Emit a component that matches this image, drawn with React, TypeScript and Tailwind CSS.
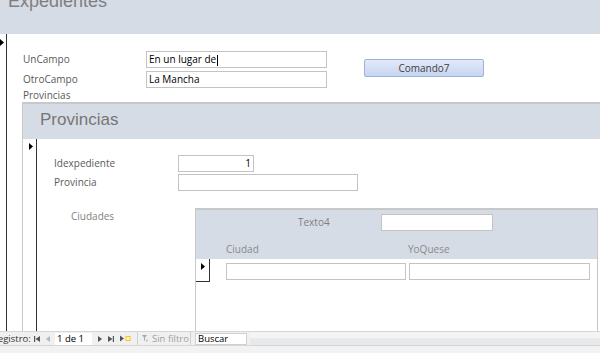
import React from "react";

const Tri = ({ c = "#000" }: { c?: string }) => (
  <svg width="4" height="7" viewBox="0 0 4 7" className="block">
    <path d="M0 0L4 3.5L0 7Z" fill={c} />
  </svg>
);

const Box = ({ w, children, right }: { w: string; children?: React.ReactNode; right?: boolean }) => (
  <div
    className={`${w} h-[17px] border border-[#c3c3c3] bg-white text-black text-[10px] leading-[15px] px-[2px] whitespace-nowrap ${right ? "text-right" : ""}`}
  >
    {children}
  </div>
);

export default function App() {
  return (
    <div
      className="w-[600px] h-[353px] overflow-hidden bg-white flex flex-col"
      style={{ fontFamily: "'Open Sans', 'Noto Sans', sans-serif" }}
    >
      {/* Form header */}
      <div className="h-[34px] shrink-0 bg-[#d6dce5] overflow-hidden">
        <div
          className="mt-[-10px] pl-[8px] text-[18px] leading-[22px] text-[#7f7f7f]"
          style={{ fontFamily: "'Liberation Sans', Arial, sans-serif" }}
        >
          Expedientes
        </div>
      </div>

      {/* Main */}
      <div className="h-[297px] shrink-0 flex">
        <div className="w-[7px] shrink-0 border-r border-[#333] pt-[5px]">
          <Tri />
        </div>
        <div className="flex-1 flex flex-col min-w-0">
          <div className="pt-[17px] flex">
            <div className="ml-[16px] flex flex-col gap-[3px]">
              <div className="flex items-center h-[17px]">
                <div className="w-[123px] text-[10px] text-[#595959]">UnCampo</div>
                <Box w="w-[181px]">
                  En un lugar de<span className="inline-block w-px h-[11px] bg-black align-middle ml-px" />
                </Box>
              </div>
              <div className="flex items-center h-[17px]">
                <div className="w-[123px] text-[10px] text-[#595959]">OtroCampo</div>
                <Box w="w-[181px]">La Mancha</Box>
              </div>
            </div>
            <div className="ml-[37px] mt-[8px] w-[120px] h-[18px] rounded-[2px] border border-[#9db3da] bg-gradient-to-b from-[#e3eaf8] to-[#c6d5f1] flex items-center justify-center text-[10px] text-[#404040]">
              Comando7
            </div>
          </div>
          <div className="ml-[16px] h-[14px] leading-[14px] text-[10px] text-[#595959]">Provincias</div>

          {/* Subform Provincias */}
          <div className="ml-[15px] flex-1 flex flex-col border-t-2 border-l border-[#c8c8c8] min-h-0">
            <div className="h-[35px] shrink-0 bg-[#d6dce5] pl-[17px] pt-[5px]">
              <div
                className="text-[17px] leading-[22px] text-[#767676]"
                style={{ fontFamily: "'Liberation Sans', Arial, sans-serif" }}
              >
                Provincias
              </div>
            </div>
            <div className="flex-1 flex min-h-0">
              <div className="w-[14px] shrink-0 border-r border-[#333] pt-[4px] pl-[6px]">
                <Tri />
              </div>
              <div className="flex-1 flex flex-col min-w-0 pt-[16px]">
                <div className="flex flex-col gap-[2px]">
                  <div className="flex items-center h-[17px]">
                    <div className="pl-[17px] w-[141px] text-[10px] text-[#595959]">Idexpediente</div>
                    <Box w="w-[76px]" right>1</Box>
                  </div>
                  <div className="flex items-center h-[17px]">
                    <div className="pl-[17px] w-[141px] text-[10px] text-[#595959]">Provincia</div>
                    <Box w="w-[180px]" />
                  </div>
                </div>
                <div className="mt-[17px] flex flex-1 min-h-0">
                  <div className="pl-[34px] w-[158px] shrink-0 text-[10px] leading-[14px] pt-[1px] text-[#7f7f7f]">
                    Ciudades
                  </div>
                  {/* Nested subform Ciudades */}
                  <div className="flex-1 mr-[2px] flex flex-col border-t-2 border-l border-r border-[#c8c8c8]">
                    <div className="h-[49px] shrink-0 bg-[#d6dce5] pt-[4px]">
                      <div className="flex items-center h-[17px]">
                        <div className="pl-[102px] w-[185px] text-[10px] text-[#7f7f7f]">Texto4</div>
                        <Box w="w-[112px]" />
                      </div>
                      <div className="mt-[11px] flex h-[14px] leading-[14px] text-[10px] text-[#8a8a8a]">
                        <div className="pl-[30px] w-[212px]">Ciudad</div>
                        <div>YoQuese</div>
                      </div>
                    </div>
                    <div className="flex">
                      <div className="w-[14px] h-[23px] shrink-0 border-r border-b border-[#333] pt-[4px] pl-[5px]">
                        <Tri />
                      </div>
                      <div className="ml-[16px] mt-[4px] flex gap-[3px]">
                        <Box w="w-[180px]" />
                        <Box w="w-[181px]" />
                      </div>
                    </div>
                  </div>
                </div>
              </div>
            </div>
          </div>
        </div>
      </div>

      {/* Navigation bar */}
      <div className="h-[15px] shrink-0 flex border-t border-b border-[#d6d6d6]">
        <div className="w-[250px] shrink-0 bg-[#f0f0f0] flex items-center text-[9.5px] text-[#333] leading-[13px] whitespace-nowrap">
          <span className="ml-[-8px] w-[39px] shrink-0">Registro:</span>
          <svg width="6" height="6" viewBox="0 0 6 6" className="ml-[3px] shrink-0">
            <rect x="0" y="0" width="1.2" height="6" fill="#555" />
            <path d="M6 0L1.5 3L6 6Z" fill="#555" />
          </svg>
          <svg width="4" height="6" viewBox="0 0 4 6" className="ml-[6px] shrink-0">
            <path d="M4 0L0 3L4 6Z" fill="#b5b5b5" />
          </svg>
          <div className="ml-[5px] w-[37px] h-[12px] shrink-0 bg-white pl-[2px] text-black leading-[12px]">1 de 1</div>
          <svg width="4" height="6" viewBox="0 0 4 6" className="ml-[6px] shrink-0">
            <path d="M0 0L4 3L0 6Z" fill="#555" />
          </svg>
          <svg width="6" height="6" viewBox="0 0 6 6" className="ml-[6px] shrink-0">
            <path d="M0 0L4.5 3L0 6Z" fill="#555" />
            <rect x="4.8" y="0" width="1.2" height="6" fill="#555" />
          </svg>
          <svg width="11" height="7" viewBox="0 0 11 7" className="ml-[6px] shrink-0">
            <path d="M0 0.5L4 3.5L0 6.5Z" fill="#555" />
            <rect x="5.5" y="1" width="5" height="5" fill="#f4c430" />
            <rect x="6.5" y="2" width="3" height="3" fill="#fff5c0" />
          </svg>
          <div className="ml-[6px] w-px h-[13px] shrink-0 bg-[#d0d0d0]" />
          <svg width="6" height="7" viewBox="0 0 6 7" className="ml-[4px] shrink-0">
            <path d="M0 0H5L3 2.5V6L2 5V2.5Z" fill="#a8a8a8" />
            <path d="M4 4.5L6 6.5M6 4.5L4 6.5" stroke="#a8a8a8" strokeWidth="0.8" />
          </svg>
          <span className="ml-[4px] w-[35px] shrink-0 text-[#a0a0a0]">Sin filtro</span>
          <div className="ml-[3px] w-px h-[13px] shrink-0 bg-[#d0d0d0]" />
          <div className="ml-[4px] w-[52px] h-[12px] shrink-0 bg-white border border-[#d0d0d0] pl-[2px] text-black leading-[10px]">
            Buscar
          </div>
        </div>
        <div className="flex-1 flex flex-col">
          <div className="h-[6px] bg-[#f3f4f6]" />
          <div className="flex-1 bg-[#e8e9eb]" />
        </div>
      </div>
      <div className="flex-1 bg-[#f2f2f2]" />
    </div>
  );
}
